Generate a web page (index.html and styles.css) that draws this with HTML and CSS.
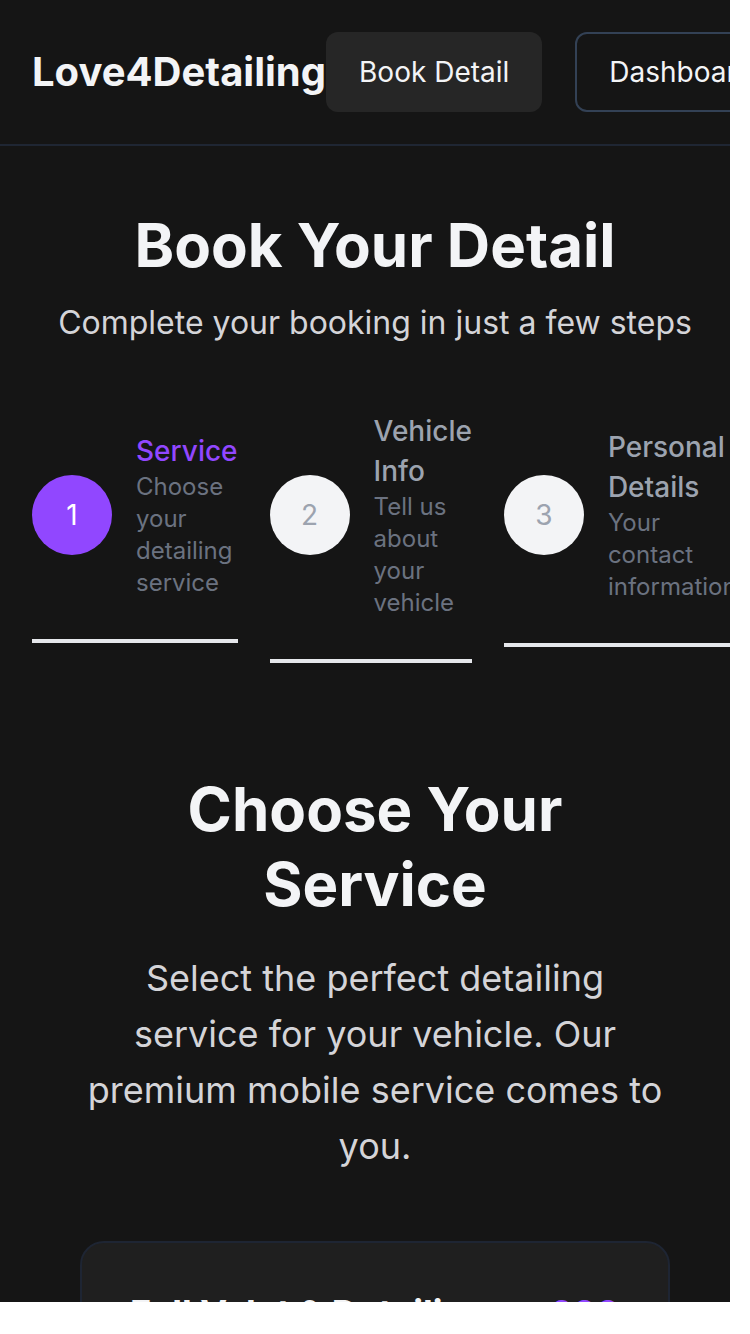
FILE: index.html
```html
<!DOCTYPE html>
<html lang="en">
<head>
<meta charset="utf-8">
<title>Love4Detailing – Book Your Detail</title>
<link rel="stylesheet" href="styles.css">
</head>
<body>
<div class="viewport">
  <div class="page">
    <header class="site-header">
      <div class="logo">Love4Detailing</div>
      <nav class="nav">
        <a class="btn btn-solid">Book Detail</a>
        <a class="btn btn-outline">Dashboard</a>
      </nav>
    </header>

    <section class="intro">
      <h1 class="title">Book Your Detail</h1>
      <p class="subtitle">Complete your booking in just a few steps</p>
    </section>

    <div class="steps">
      <div class="step">
        <div class="step-row">
          <div class="circle circle-active">1</div>
          <div class="step-text">
            <div class="step-label step-label-active">Service</div>
            <div class="step-desc">Choose your detailing service</div>
          </div>
        </div>
        <div class="bar"></div>
      </div>
      <div class="step">
        <div class="step-row">
          <div class="circle">2</div>
          <div class="step-text">
            <div class="step-label">Vehicle Info</div>
            <div class="step-desc">Tell us about your vehicle</div>
          </div>
        </div>
        <div class="bar"></div>
      </div>
      <div class="step">
        <div class="step-row">
          <div class="circle">3</div>
          <div class="step-text">
            <div class="step-label">Personal Details</div>
            <div class="step-desc">Your contact information</div>
          </div>
        </div>
        <div class="bar"></div>
      </div>
    </div>

    <section class="services">
      <h2 class="services-title">Choose Your Service</h2>
      <p class="services-lead">Select the perfect detailing service for your vehicle. Our premium mobile service comes to you.</p>
      <div class="card">
        <div class="card-head">
          <span class="card-title">Full Valet &amp; Detailing</span>
          <span class="card-price">£60</span>
        </div>
      </div>
    </section>
  </div>
</div>
</body>
</html>
```

FILE: styles.css
```css
html, body {
  margin: 0;
  padding: 0;
  background: #ffffff;
}

.viewport {
  width: 730px;
  height: 1302px;
  overflow: hidden;
  background: #151515;
}

.page {
  width: 750px;
  font-family: "Inter", "Noto Sans", sans-serif;
  color: #f3f4f6;
}

.site-header {
  display: flex;
  justify-content: space-between;
  align-items: center;
  padding: 32px;
  border-bottom: 2px solid #1f2633;
}

.logo {
  font-size: 40px;
  font-weight: 700;
  line-height: 48px;
  white-space: nowrap;
  flex-shrink: 0;
  color: #f3f4f6;
}

.nav {
  display: flex;
  gap: 33px;
  flex-shrink: 0;
}

.btn {
  display: block;
  font-size: 28px;
  line-height: 40px;
  white-space: nowrap;
  border-radius: 12px;
  color: #f3f4f6;
}

.btn-solid {
  background: #262626;
  padding: 20px 33px;
}

.btn-outline {
  border: 2px solid #334155;
  padding: 18px 32px;
}

.intro {
  padding-top: 63px;
  text-align: center;
}

.title {
  margin: 0;
  font-size: 60px;
  line-height: 72px;
  font-weight: 700;
  color: #f3f4f6;
}

.subtitle {
  margin: 18px 0 0;
  font-size: 32px;
  line-height: 48px;
  color: #d4d4d8;
}

.steps {
  display: flex;
  align-items: center;
  gap: 32px;
  padding: 0 32px;
  margin-top: 64px;
}

.step {
  flex: 1 1 0;
  display: flex;
  flex-direction: column;
}

.step-row {
  display: flex;
  align-items: center;
  gap: 24px;
}

.circle {
  width: 80px;
  height: 80px;
  flex-shrink: 0;
  border-radius: 50%;
  background: #f3f4f6;
  color: #9ca3af;
  font-size: 28px;
  display: flex;
  align-items: center;
  justify-content: center;
}

.circle-active {
  background: #9147ff;
  color: #ffffff;
}

.step-label {
  font-size: 28px;
  line-height: 40px;
  font-weight: 500;
  color: #9ca3af;
}

.step-label-active {
  color: #9147ff;
}

.step-desc {
  font-size: 24px;
  line-height: 32px;
  color: #6b7280;
}

.bar {
  height: 4px;
  margin-top: 40px;
  background: #e5e7eb;
}

.services {
  padding: 0 80px;
  margin-top: 109px;
  text-align: center;
}

.services-title {
  margin: 0;
  font-size: 60px;
  line-height: 75px;
  font-weight: 700;
  color: #f3f4f6;
}

.services-lead {
  margin: 28px 0 0;
  font-size: 36px;
  line-height: 56px;
  color: #d4d4d8;
}

.card {
  margin-top: 67px;
  background: #1f1f1f;
  border: 2px solid #1e2533;
  border-radius: 24px;
  padding: 48px;
  text-align: left;
}

.card-head {
  display: flex;
  justify-content: space-between;
  align-items: flex-start;
}

.card-title {
  font-size: 36px;
  line-height: 44px;
  font-weight: 700;
  color: #f3f4f6;
}

.card-price {
  font-size: 36px;
  line-height: 44px;
  font-weight: 700;
  color: #9147ff;
}
```
